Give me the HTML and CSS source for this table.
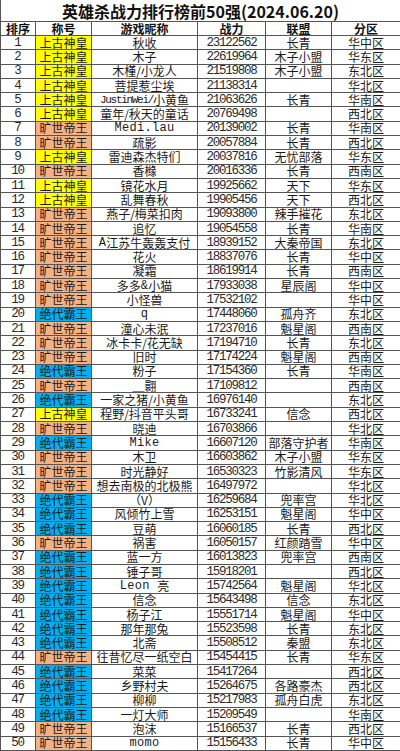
FILE: index.html
```html
<!DOCTYPE html>
<html lang="zh-CN">
<head>
<meta charset="utf-8">
<title>英雄杀战力排行榜前50强</title>
<link rel="stylesheet" href="styles.css">
</head>
<body>
<div class="sheet">
<div class="c title">英雄杀战力排行榜前50强(2024.06.20)</div>
<div class="c h">排序</div><div class="c h">称号</div><div class="c h">游戏昵称</div><div class="c h">战力</div><div class="c h">联盟</div><div class="c h">分区</div>
<div class="c r">1</div><div class="c t sg">上古神皇</div><div class="c n">秋收</div><div class="c p">23122562</div><div class="c g">长青</div><div class="c z">华中区</div>
<div class="c r">2</div><div class="c t sg">上古神皇</div><div class="c n">木子</div><div class="c p">22619964</div><div class="c g">木子小盟</div><div class="c z">华东区</div>
<div class="c r">3</div><div class="c t sg">上古神皇</div><div class="c n">木槿/小龙人</div><div class="c p">21519808</div><div class="c g">木子小盟</div><div class="c z">东北区</div>
<div class="c r">4</div><div class="c t sg">上古神皇</div><div class="c n">菩提惹尘埃</div><div class="c p">21138314</div><div class="c g"></div><div class="c z">华北区</div>
<div class="c r">5</div><div class="c t sg">上古神皇</div><div class="c n"><span class="lat tight">JustinWei/</span>小黄鱼</div><div class="c p">21063626</div><div class="c g">长青</div><div class="c z">华南区</div>
<div class="c r">6</div><div class="c t sg">上古神皇</div><div class="c n">童年/秋天的童话</div><div class="c p">20769498</div><div class="c g"></div><div class="c z">西北区</div>
<div class="c r">7</div><div class="c t ks">旷世帝王</div><div class="c n"><span class="lat">Medi.lau</span></div><div class="c p">20139002</div><div class="c g">长青</div><div class="c z">华南区</div>
<div class="c r">8</div><div class="c t ks">旷世帝王</div><div class="c n">疏影</div><div class="c p">20057884</div><div class="c g">长青</div><div class="c z">西北区</div>
<div class="c r">9</div><div class="c t sg">上古神皇</div><div class="c n">雷迪森杰特们</div><div class="c p">20037816</div><div class="c g">无忧部落</div><div class="c z">华东区</div>
<div class="c r">10</div><div class="c t ks">旷世帝王</div><div class="c n">香橼</div><div class="c p">20016336</div><div class="c g">长青</div><div class="c z">西南区</div>
<div class="c r">11</div><div class="c t sg">上古神皇</div><div class="c n">镜花水月</div><div class="c p">19925662</div><div class="c g">天下</div><div class="c z">华东区</div>
<div class="c r">12</div><div class="c t sg">上古神皇</div><div class="c n">乱舞春秋</div><div class="c p">19905456</div><div class="c g">天下</div><div class="c z">西北区</div>
<div class="c r">13</div><div class="c t ks">旷世帝王</div><div class="c n">燕子/梅菜扣肉</div><div class="c p">19093800</div><div class="c g">辣手摧花</div><div class="c z">东北区</div>
<div class="c r">14</div><div class="c t ks">旷世帝王</div><div class="c n">追忆</div><div class="c p">19054558</div><div class="c g">长青</div><div class="c z">华南区</div>
<div class="c r">15</div><div class="c t ks">旷世帝王</div><div class="c n"><span class="lat">A</span>江苏牛轰轰支付</div><div class="c p">18939152</div><div class="c g">大秦帝国</div><div class="c z">东北区</div>
<div class="c r">16</div><div class="c t ks">旷世帝王</div><div class="c n">花火</div><div class="c p">18837076</div><div class="c g">长青</div><div class="c z">华中区</div>
<div class="c r">17</div><div class="c t ks">旷世帝王</div><div class="c n">凝霜</div><div class="c p">18619914</div><div class="c g">长青</div><div class="c z">西南区</div>
<div class="c r">18</div><div class="c t ks">旷世帝王</div><div class="c n">多多<span class="lat">&amp;</span>小猫</div><div class="c p">17933038</div><div class="c g">星辰阁</div><div class="c z">华中区</div>
<div class="c r">19</div><div class="c t ks">旷世帝王</div><div class="c n">小怪兽</div><div class="c p">17532102</div><div class="c g"></div><div class="c z">华中区</div>
<div class="c r">20</div><div class="c t jd">绝代霸王</div><div class="c n"><span class="lat">q</span></div><div class="c p">17448060</div><div class="c g">孤舟齐</div><div class="c z">东北区</div>
<div class="c r">21</div><div class="c t ks">旷世帝王</div><div class="c n">潼心未泯</div><div class="c p">17237016</div><div class="c g">魁星阁</div><div class="c z">西南区</div>
<div class="c r">22</div><div class="c t ks">旷世帝王</div><div class="c n">冰卡卡/花无缺</div><div class="c p">17194710</div><div class="c g">长青</div><div class="c z">东北区</div>
<div class="c r">23</div><div class="c t ks">旷世帝王</div><div class="c n">旧时</div><div class="c p">17174224</div><div class="c g">魁星阁</div><div class="c z">西南区</div>
<div class="c r">24</div><div class="c t jd">绝代霸王</div><div class="c n">粉子</div><div class="c p">17154360</div><div class="c g">长青</div><div class="c z">华南区</div>
<div class="c r">25</div><div class="c t ks">旷世帝王</div><div class="c n">＿翾</div><div class="c p">17109812</div><div class="c g"></div><div class="c z">西南区</div>
<div class="c r">26</div><div class="c t jd">绝代霸王</div><div class="c n">一家之猪/小黄鱼</div><div class="c p">16976140</div><div class="c g"></div><div class="c z">东北区</div>
<div class="c r">27</div><div class="c t sg">上古神皇</div><div class="c n">程野/抖音平头哥</div><div class="c p">16733241</div><div class="c g">信念</div><div class="c z">西北区</div>
<div class="c r">28</div><div class="c t ks">旷世帝王</div><div class="c n">晓迪</div><div class="c p">16703866</div><div class="c g"></div><div class="c z">华北区</div>
<div class="c r">29</div><div class="c t jd">绝代霸王</div><div class="c n"><span class="lat">Mike</span></div><div class="c p">16607120</div><div class="c g">部落守护者</div><div class="c z">华南区</div>
<div class="c r">30</div><div class="c t ks">旷世帝王</div><div class="c n">木卫</div><div class="c p">16603862</div><div class="c g">木子小盟</div><div class="c z">华东区</div>
<div class="c r">31</div><div class="c t ks">旷世帝王</div><div class="c n">时光静好</div><div class="c p">16530323</div><div class="c g">竹影清风</div><div class="c z">华东区</div>
<div class="c r">32</div><div class="c t ks">旷世帝王</div><div class="c n">想去南极的北极熊</div><div class="c p">16497972</div><div class="c g"></div><div class="c z">华北区</div>
<div class="c r">33</div><div class="c t jd">绝代霸王</div><div class="c n">（V）</div><div class="c p">16259684</div><div class="c g">兜率宫</div><div class="c z">华北区</div>
<div class="c r">34</div><div class="c t jd">绝代霸王</div><div class="c n">风倾竹上雪</div><div class="c p">16253151</div><div class="c g">魁星阁</div><div class="c z">华中区</div>
<div class="c r">35</div><div class="c t jd">绝代霸王</div><div class="c n">豆萌</div><div class="c p">16060185</div><div class="c g">长青</div><div class="c z">西北区</div>
<div class="c r">36</div><div class="c t ks">旷世帝王</div><div class="c n">祸害</div><div class="c p">16050157</div><div class="c g">红颜踏雪</div><div class="c z">华中区</div>
<div class="c r">37</div><div class="c t jd">绝代霸王</div><div class="c n">蓝一方</div><div class="c p">16013823</div><div class="c g">兜率宫</div><div class="c z">西南区</div>
<div class="c r">38</div><div class="c t jd">绝代霸王</div><div class="c n">锤子哥</div><div class="c p">15918201</div><div class="c g"></div><div class="c z">西北区</div>
<div class="c r">39</div><div class="c t jd">绝代霸王</div><div class="c n"><span class="lat">Leon&nbsp;</span>亮</div><div class="c p">15742564</div><div class="c g">魁星阁</div><div class="c z">华北区</div>
<div class="c r">40</div><div class="c t jd">绝代霸王</div><div class="c n">信念</div><div class="c p">15643498</div><div class="c g">信念</div><div class="c z">东北区</div>
<div class="c r">41</div><div class="c t jd">绝代霸王</div><div class="c n">杨子江</div><div class="c p">15551714</div><div class="c g">魁星阁</div><div class="c z">华中区</div>
<div class="c r">42</div><div class="c t jd">绝代霸王</div><div class="c n">那年那兔</div><div class="c p">15523598</div><div class="c g">长青</div><div class="c z">东北区</div>
<div class="c r">43</div><div class="c t jd">绝代霸王</div><div class="c n">北斋</div><div class="c p">15508512</div><div class="c g">秦盟</div><div class="c z">东北区</div>
<div class="c r">44</div><div class="c t ks">旷世帝王</div><div class="c n">往昔忆尽一纸空白</div><div class="c p">15454415</div><div class="c g">长青</div><div class="c z">华东区</div>
<div class="c r">45</div><div class="c t jd">绝代霸王</div><div class="c n">菜菜</div><div class="c p">15417264</div><div class="c g"></div><div class="c z">西北区</div>
<div class="c r">46</div><div class="c t jd">绝代霸王</div><div class="c n">乡野村夫</div><div class="c p">15264675</div><div class="c g">各路豪杰</div><div class="c z">西北区</div>
<div class="c r">47</div><div class="c t jd">绝代霸王</div><div class="c n">柳柳</div><div class="c p">15217983</div><div class="c g">孤舟白虎</div><div class="c z">东北区</div>
<div class="c r">48</div><div class="c t jd">绝代霸王</div><div class="c n">一灯大师</div><div class="c p">15209549</div><div class="c g"></div><div class="c z">华南区</div>
<div class="c r">49</div><div class="c t ks">旷世帝王</div><div class="c n">泡沫</div><div class="c p">15166537</div><div class="c g">长青</div><div class="c z">西北区</div>
<div class="c r">50</div><div class="c t ks">旷世帝王</div><div class="c n"><span class="lat">momo</span></div><div class="c p">15156433</div><div class="c g">长青</div><div class="c z">华中区</div>
</div>
</body>
</html>
```
FILE: styles.css
```css
html, body {
  margin: 0;
  padding: 0;
  background: #ffffff;
}
body {
  font-family: "Noto Sans CJK SC", "Noto Sans", sans-serif;
  color: #1a1a1a;
}
.sheet {
  width: 400px;
  display: grid;
  grid-template-columns: 34px 55px 105px 67px 65px 68px;
  grid-template-rows: 21px 13px repeat(50, 13.3px);
  gap: 1px;
  padding: 0 0 1px 1px;
  background: #555555;
  box-sizing: border-box;
}
.c {
  background: #ffffff;
  display: flex;
  align-items: center;
  justify-content: center;
  white-space: nowrap;
  font-size: 12px;
  line-height: 12px;
}
.title {
  grid-column: 1 / -1;
  font-size: 16px;
  font-weight: 700;
  line-height: 18px;
  color: #111;
}
.h {
  font-weight: 700;
  font-size: 12px;
  color: #111;
}
.r, .p {
  font-family: "Liberation Mono", monospace;
  font-size: 12.5px;
  letter-spacing: -1.25px;
  color: #2a2a2a;
}
.r { padding-right: 1px; }
.t { color: #1a1a1a; }
.sg { background: #ffff00; }
.ks { background: #f4b183; }
.jd { background: #00b0f0; }
.lat {
  font-family: "Liberation Mono", monospace;
  font-size: 12px;
  letter-spacing: 0.3px;
}
.tight {
  font-size: 11px;
  letter-spacing: -1.3px;
}
```
